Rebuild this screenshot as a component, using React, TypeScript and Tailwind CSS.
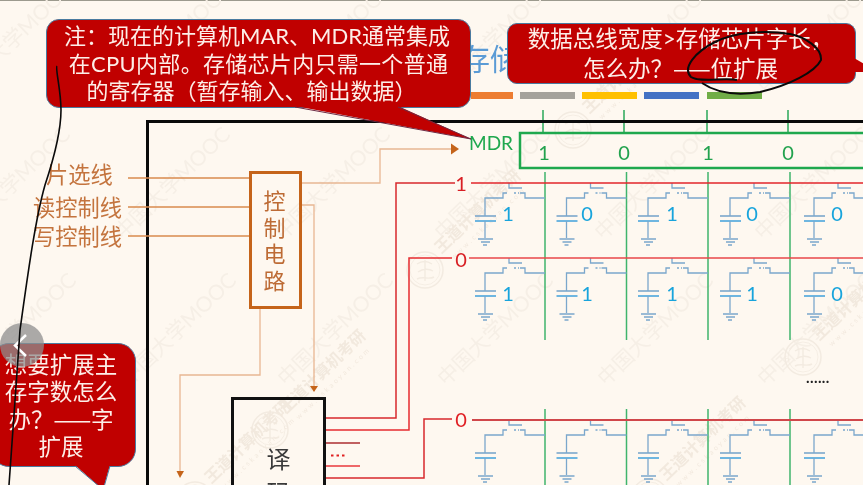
import React from "react";

const BIT_X = [545, 626.5, 708, 790, 874];
const ROWS = [
  { y: 183, bits: ["1", "0", "1", "0", "0"] },
  { y: 258, bits: ["1", "1", "1", "1", "0"] },
  { y: 420, bits: [] as string[] },
];
const DIGIT_X = [508, 587, 672, 752, 837];

const MOOC = [
  [-30, 81], [130, 81], [290, 81], [450, 81], [610, 81], [770, 81],
  [-33, 227], [127, 227], [287, 227], [447, 227], [607, 227], [767, 227],
  [-27, 373], [133, 373], [290, 373], [450, 373], [610, 373], [770, 373],
];
const LOGOS = [
  [270, 430], [425, 270], [573, 130], [803, 357], [650, 497], [195, 500],
];

function Cell({ bx, wy }: { bx: number; wy: number }) {
  const stroke = "#7ba7cc";
  const cx = bx - 60;
  return (
    <g fill="none" stroke={stroke} strokeWidth={1.3}>
      <path d={`M${bx - 36} ${wy}v5h13`} />
      <path d={`M${bx} ${wy + 15}h-20v-5h-5`} />
      <path d={`M${bx - 38} ${wy + 10}h-4v5h-18V${wy + 33}`} />
      <path d={`M${bx - 31} ${wy + 10}h2M${bx - 27} ${wy + 10}h1`} />
      <path d={`M${cx - 10} ${wy + 33}h21`} strokeWidth={1.6} />
      <path d={`M${cx - 10} ${wy + 38}h21`} strokeWidth={2} stroke="#6fb6e0" />
      <path d={`M${cx} ${wy + 38}v17`} />
      <path d={`M${cx - 7} ${wy + 56}h15M${cx - 4} ${wy + 59}h9M${cx - 2} ${wy + 62}h4`} />
    </g>
  );
}

function Digit({ x, y, t, cls }: { x: number; y: number; t: string; cls: string }) {
  return (
    <span
      className={`absolute -translate-x-1/2 -translate-y-1/2 leading-none ${cls}`}
      style={{ left: x, top: y }}
    >
      {t}
    </span>
  );
}

function Dash() {
  return <span className="font-['Noto_Sans_CJK_SC',sans-serif]">——</span>;
}

export default function App() {
  const font = "font-['Lato','Noto_Sans_CJK_SC',sans-serif]";
  return (
    <div className={`relative w-[863px] h-[485px] overflow-hidden bg-[#fef8f0] ${font} blur-[0.45px]`}>
      <div className="absolute left-0 top-0 w-full h-px bg-[#9c9a8e]" />

      {/* watermarks */}
      {MOOC.map(([x, y], i) => (
        <span
          key={i}
          className="absolute origin-left -rotate-[44deg] whitespace-nowrap text-[21px] leading-none text-[#f6efe6] -translate-y-1/2"
          style={{ left: x - 10, top: y + 8 }}
        >
          中国大学MOOC
        </span>
      ))}
      {LOGOS.map(([x, y], i) => (
        <React.Fragment key={i}>
          <svg
            className="absolute -translate-x-1/2 -translate-y-1/2"
            style={{ left: x, top: y }}
            width={40}
            height={40}
            fill="none"
            stroke="#f3ebe1"
            strokeWidth={1.5}
          >
            <circle cx={20} cy={20} r={18} />
            <circle cx={20} cy={20} r={15} strokeWidth={0.8} />
            <path d="M12 14C18 10 24 12 27 14M13 22C18 18 25 19 28 21M12 29C18 26 24 30 29 27M20 10V31" />
          </svg>
          <span
            className="absolute origin-left -rotate-[44deg] whitespace-nowrap text-[16px] font-bold leading-none text-[#f2e9de] -translate-y-1/2"
            style={{ left: x + 12, top: y - 20 }}
          >
            王道计算机考研
          </span>
          <span
            className="absolute origin-left -rotate-[44deg] whitespace-nowrap text-[7px] tracking-[2.500px] leading-none text-[#f2e9de] -translate-y-1/2"
            style={{ left: x + 27, top: y - 12 }}
          >
            www.cskaoyan.com
          </span>
        </React.Fragment>
      ))}

      {/* title fragment & colour bars */}
      <span className="absolute left-[460px] top-[38px] text-[30px] leading-[40px] text-[#5b9bd5]">存储</span>
      <div className="absolute left-[471px] top-[92px] flex gap-[7px]">
        <i className="block w-[42px] h-[7px] bg-[#ed7d31]" />
        <i className="block w-[55px] h-[7px] bg-[#a5a29b]" />
        <i className="block w-[55px] h-[7px] bg-[#ffc000]" />
        <i className="block w-[55px] h-[7px] bg-[#4472c4]" />
        <i className="block w-[55px] h-[7px] ml-px bg-[#70ad47]" />
      </div>

      {/* circuit drawing */}
      <svg className="absolute left-0 top-0" width={863} height={485} fill="none">
        {[543, 624, 707, 788].map((x) => (
          <path key={x} d={`M${x} 110v22`} stroke="#2aa85a" strokeWidth={1.5} />
        ))}
        <path d="M147.5 485V121.5H863" stroke="#0a0a0a" strokeWidth={3} />
        <rect x={520} y={133} width={360} height={35} stroke="#1fa84e" strokeWidth={2.5} />

        {/* bit lines */}
        {BIT_X.slice(0, 4).map((x) => (
          <g key={x} stroke="#3fb56c" strokeWidth={1.5}>
            <path d={`M${x} 172V340`} />
            <path d={`M${x} 409V485`} />
          </g>
        ))}
        {ROWS.map((r) =>
          BIT_X.map((x) => <Cell key={`${r.y}-${x}`} bx={x} wy={r.y} />)
        )}
        {/* word lines */}
        <path d="M471 183H863" stroke="#e2262b" strokeWidth={1.5} />
        <path d="M469 258H863" stroke="#e8474a" strokeWidth={1.5} />
        <path d="M472 420H863" stroke="#d0474a" strokeWidth={2} />

        {/* control */}
        <g stroke="#d98a4d" strokeWidth={1.5}>
          <path d="M128 178H250M128 207H250M128 236H250" />
        </g>
        <g stroke="#e8b692" strokeWidth={1.3}>
          <path d="M301 183H380V149H453" />
          <path d="M301 205H314V387" />
          <path d="M260 308V375H180V472" />
        </g>
        <path d="M451 143.5L459 149L451 154.5Z" fill="#c5641a" />
        <path d="M310 386H318L314 392Z" fill="#c5641a" />
        <path d="M176.500 471H184L180 478Z" fill="#c5641a" />
        <rect x={250.500} y={172.500} width={50} height={135} stroke="#c5641a" strokeWidth={3} />

        {/* decoder outputs */}
        <path d="M326 418H396V183H455" stroke="#d8282c" strokeWidth={1.5} />
        <path d="M326 430H409V258H452" stroke="#e62b2f" strokeWidth={1.5} />
        <path d="M326 443H360" stroke="#c06060" strokeWidth={2} />
        <path d="M326 466H360" stroke="#e8383c" strokeWidth={1.3} />
        <path d="M326 478H424V419H452" stroke="#d8282c" strokeWidth={1.5} />
        <path d="M331 455.500h2.500M336.500 455.500h2.500M342 455.500h2.500" stroke="#e02020" strokeWidth={2} />
      </svg>

      {/* decoder box */}
      <div className="absolute left-[231px] top-[397px] w-[95px] h-[120px] border-[3px] border-[#111] flex flex-col items-center pt-[42px] text-[24px] leading-[34px] text-[#3a3a3a]">
        <span>译</span>
        <span>码</span>
      </div>

      {/* control box text */}
      <div className="absolute left-[252px] top-[188px] w-[45px] flex flex-col items-center text-[22px] leading-[26.500px] text-[#bd6b35]">
        <span>控</span>
        <span>制</span>
        <span>电</span>
        <span>路</span>
      </div>

      {/* labels */}
      <div className="absolute left-[30px] top-[158px] w-[92px] flex flex-col text-[22.250px] leading-[31px] text-[#c4743e]">
        <span className="pl-[16px] leading-[34px]">片选线</span>
        <span className="whitespace-nowrap pl-[3px]">读控制线</span>
        <span className="whitespace-nowrap pl-[3px] -mt-[2px]">写控制线</span>
      </div>

      <span className="absolute left-[469px] top-[131px] text-[19px] leading-[24px] text-[#1fa84e]">MDR</span>
      {["1", "0", "1", "0"].map((t, i) => (
        <Digit key={i} x={[544, 624, 708, 788][i]} y={152} t={t} cls="text-[20px] text-[#22a24e]" />
      ))}
      <Digit x={461} y={183} t="1" cls="text-[20px] text-[#d81f24]" />
      <Digit x={461} y={259} t="0" cls="text-[20px] text-[#d81f24]" />
      <Digit x={461} y={419} t="0" cls="text-[20px] text-[#e01f24]" />
      {ROWS.slice(0, 2).map((r, ri) =>
        r.bits.map((b, i) => (
          <Digit
            key={`${ri}-${i}`}
            x={DIGIT_X[i]}
            y={ri === 0 ? 213 : 293}
            t={b}
            cls="text-[20px] text-[#18a4dc]"
          />
        ))
      )}
      <span className="absolute left-[806px] top-[367px] text-[15px] leading-[20px] font-bold tracking-[0.4px] text-[#222]">......</span>

      {/* callout 1 */}
      <div className="absolute left-[46px] top-[19px] w-[425px] h-[89px] rounded-[13px] border border-[#4a7ba0] bg-[#c00000] flex flex-col items-center justify-center text-[22px] leading-[27.500px] text-[#fdeee8] whitespace-nowrap">
        <span className="-ml-[3px]">注：现在的计算机MAR、MDR通常集成</span>
        <span className="tracking-[0.3px]">在CPU内部。存储芯片内只需一个普通</span>
        <span className="-ml-[14px]">的寄存器（暂存输入、输出数据）</span>
      </div>
      <svg className="absolute left-0 top-0" width={863} height={485}>
        <path d="M295 106L471 139L398 106Z" fill="#c00000" />
        <path d="M295 107L471 139L398 107" fill="none" stroke="#6d2b45" strokeWidth={1} />
      </svg>

      {/* callout 2 */}
      <div className="absolute left-[507px] top-[23px] w-[349px] h-[61px] rounded-[10px] border border-[#4a7ba0] bg-[#c00000] flex flex-col items-center justify-center text-[22.500px] leading-[28px] text-[#fdeee8] whitespace-nowrap">
        <span className="-ml-[2px]">数据总线宽度&gt;存储芯片字长，</span>
        <span className="-ml-[2px]">怎么办？<Dash />位扩展</span>
      </div>
      <svg className="absolute left-0 top-0" width={863} height={485}>
        <path d="M854 58L868 66L868 72L854 72Z" fill="#c00000" />
      </svg>

      {/* callout 3 */}
      <div className="absolute -left-[9px] top-[343px] w-[145px] h-[124px] rounded-[18px] border border-[#4a7ba0] bg-[#c00000] flex flex-col items-center justify-center pr-[5px] text-[22.500px] leading-[27px] text-[#fdeee8] whitespace-nowrap">
        <span>想要扩展主</span>
        <span>存字数怎么</span>
        <span>办？<Dash />字</span>
        <span>扩展</span>
      </div>
      <svg className="absolute left-0 top-0" width={863} height={485}>
        <path d="M75 465L103 490L110 465Z" fill="#c00000" />
        <path d="M75 466L100 487M110 466L104 487" fill="none" stroke="#4a7ba0" strokeWidth={1} />
      </svg>

      {/* back button */}
      <div className="absolute left-0 top-[323px] w-[44px] h-[44px] rounded-full bg-[#8f8f8f]/75 flex items-center justify-center">
        <svg width={44} height={44} fill="none">
          <path d="M26 12L15 22.500L26 33" stroke="#fff" strokeWidth={2.5} />
        </svg>
      </div>

      {/* ink annotations */}
      <svg className="absolute left-0 top-0" width={863} height={485} fill="none" stroke="#0a0a0a">
        <path
          d="M57 66C55 68 61 90 61 110C61 130 55 155 45 185C35 220 27 280 20 330C17 370 13 430 9 485"
          strokeWidth={1.6}
        />
        <path
          d="M737 80C725 77 700 83 691 77C682 68 695 52 715 42C735 32 765 30 790 34C805 37 822 48 821 60C815 72 790 85 760 92C735 96 715 92 702 83"
          strokeWidth={2}
        />
      </svg>
    </div>
  );
}
